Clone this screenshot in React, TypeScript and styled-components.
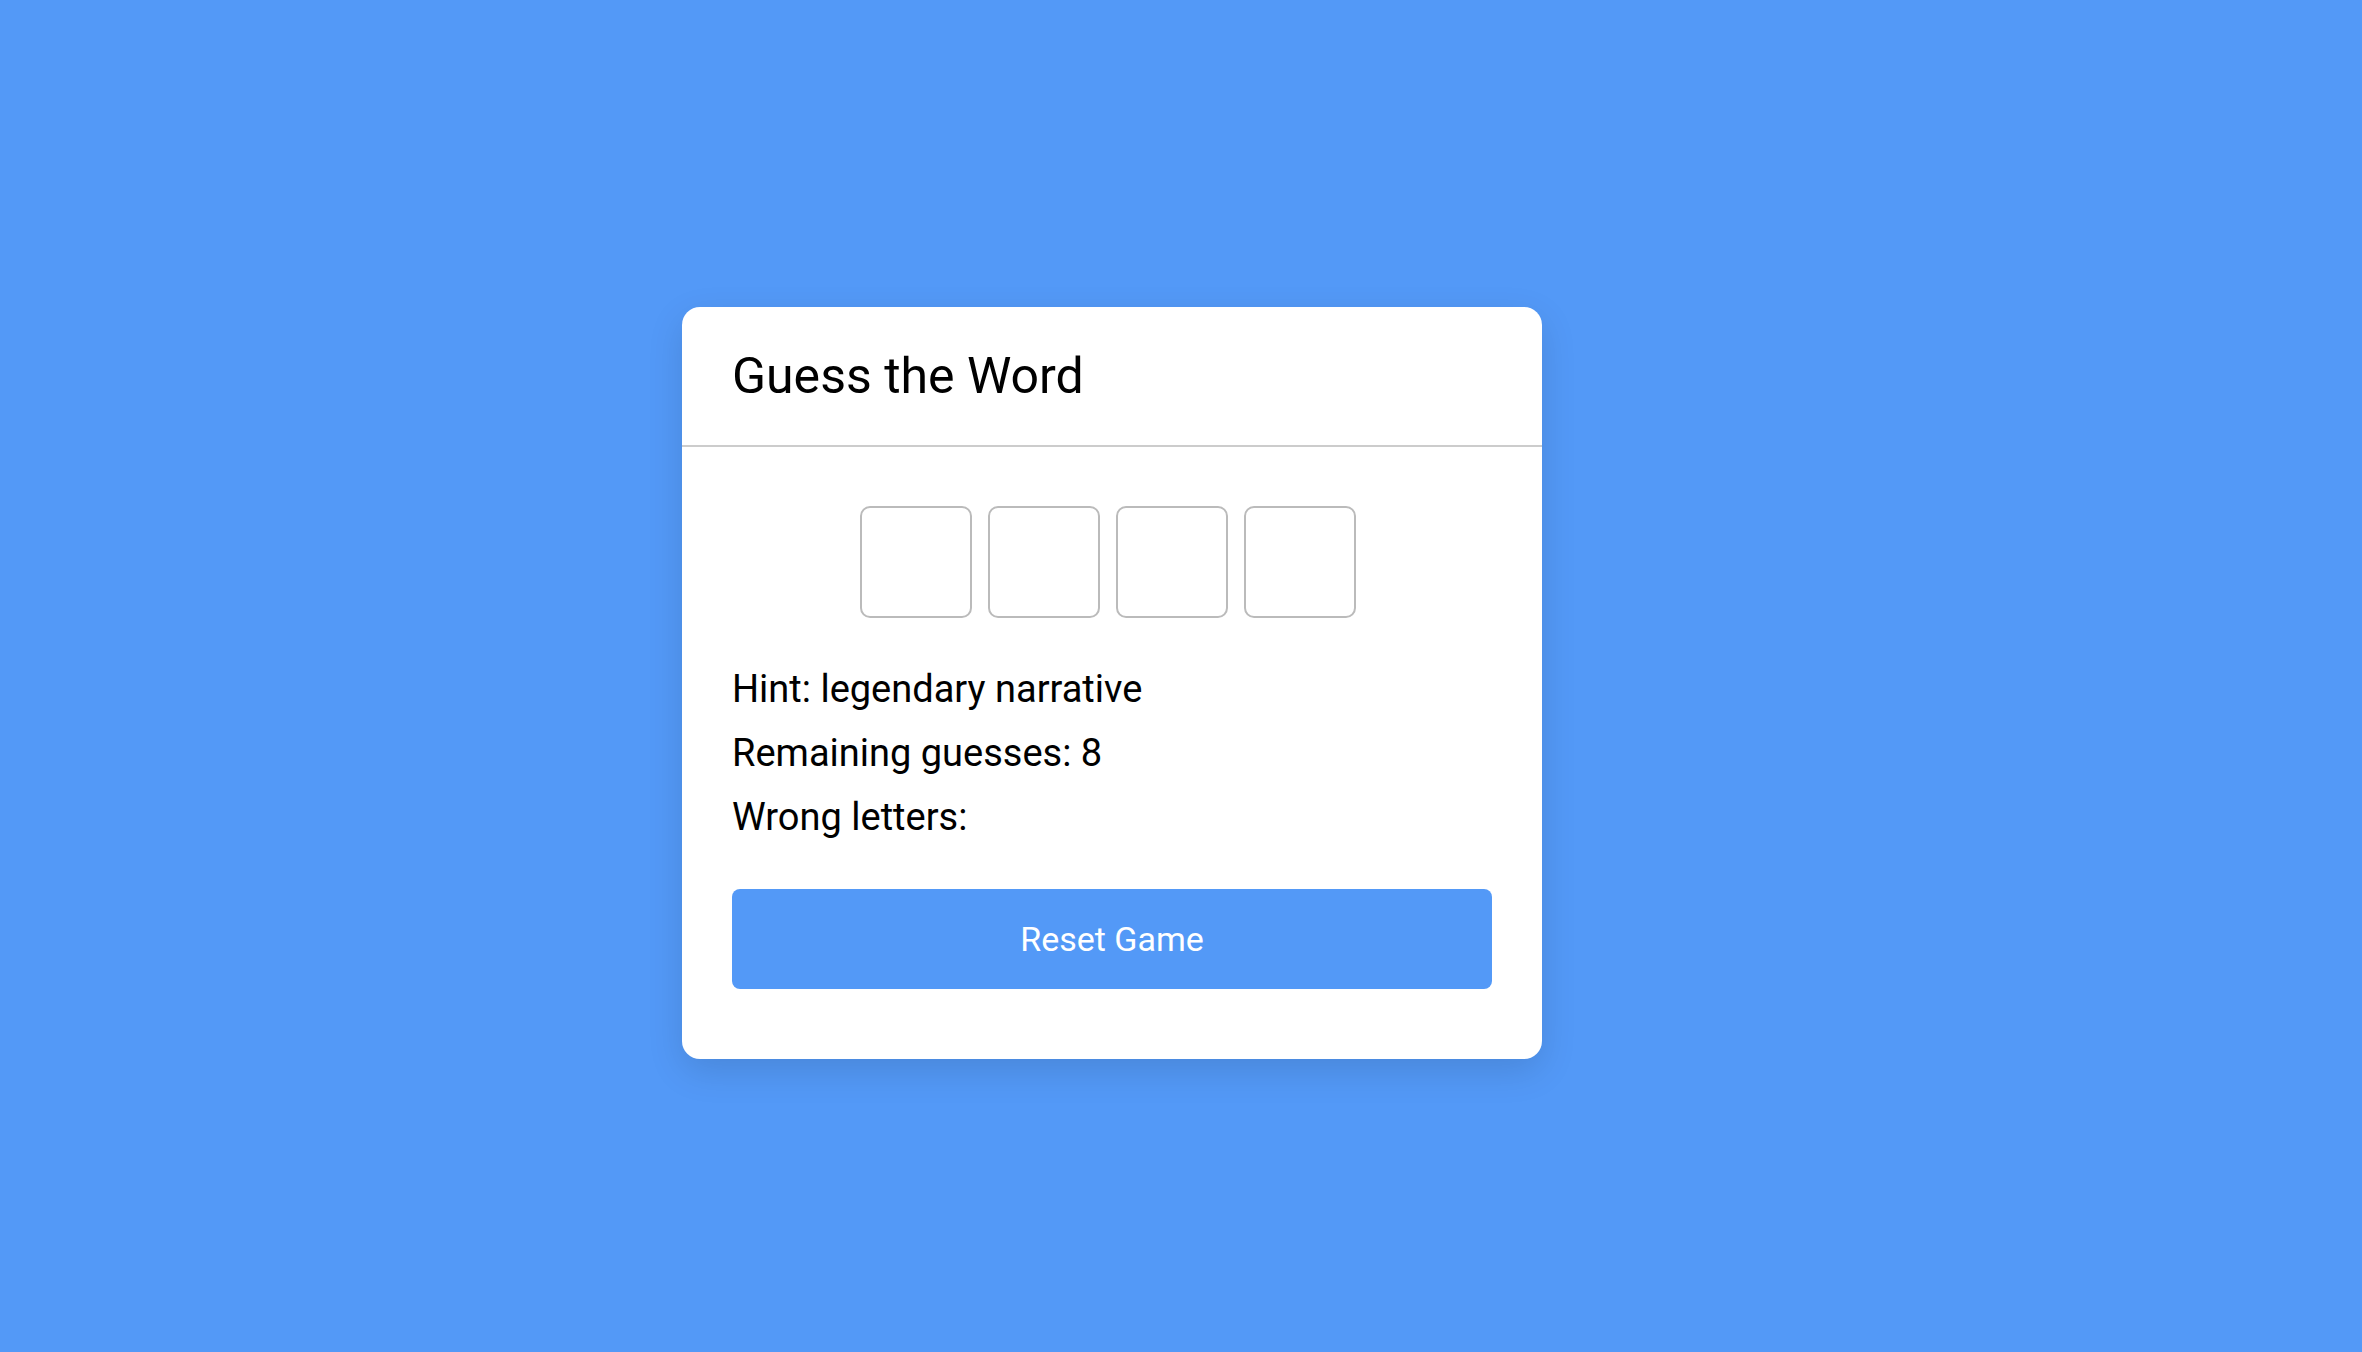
import React from "react";
import styled, { createGlobalStyle } from "styled-components";

const GlobalStyle = createGlobalStyle`
  html, body {
    margin: 0;
    padding: 0;
    background: #5399f7;
  }
  body {
    font-family: Roboto, "Liberation Sans", Arial, sans-serif;
    color: #000;
  }
`;

const Page = styled.div`
  width: 100vw;
  height: 100vh;
  display: flex;
  justify-content: center;
  align-items: flex-start;
  padding: 307px 138px 0 0;
  box-sizing: border-box;
  background: #5399f7;
`;

const Card = styled.div`
  width: 860px;
  background: #ffffff;
  border-radius: 18px;
  box-shadow: 0 12px 36px rgba(0, 0, 0, 0.12);
  overflow: hidden;
`;

const Header = styled.div`
  padding: 40px 50px 40px;
  border-bottom: 2px solid #cccccc;
`;

const Title = styled.h1`
  margin: 0;
  font-size: 50px;
  font-weight: 400;
  line-height: normal;
`;

const Body = styled.div`
  padding: 59px 50px 70px;
  display: flex;
  flex-direction: column;
`;

const TileRow = styled.div`
  display: flex;
  justify-content: center;
  gap: 16px;
  padding-right: 8px;
  margin-bottom: 49px;
`;

const Tile = styled.div`
  width: 112px;
  height: 112px;
  box-sizing: border-box;
  border: 2px solid #bbbbbb;
  border-radius: 10px;
  display: flex;
  align-items: center;
  justify-content: center;
  font-size: 48px;
`;

const InfoLine = styled.p<{ $last?: boolean }>`
  margin: 0 0 ${(p) => (p.$last ? "50px" : "20px")};
  font-size: 38px;
  line-height: normal;
`;

const ResetButton = styled.button`
  height: 100px;
  width: 100%;
  border: none;
  border-radius: 8px;
  background: #5399f7;
  color: #ffffff;
  font-family: Roboto, "Liberation Sans", Arial, sans-serif;
  font-size: 34px;
  cursor: pointer;
`;

export default function App() {
  const letters = ["", "", "", ""];
  return (
    <>
      <GlobalStyle />
      <Page>
        <Card>
          <Header>
            <Title>Guess the Word</Title>
          </Header>
          <Body>
            <TileRow>
              {letters.map((l, i) => (
                <Tile key={i}>{l}</Tile>
              ))}
            </TileRow>
            <InfoLine>Hint: legendary narrative</InfoLine>
            <InfoLine>Remaining guesses: 8</InfoLine>
            <InfoLine $last>Wrong letters: </InfoLine>
            <ResetButton>Reset Game</ResetButton>
          </Body>
        </Card>
      </Page>
    </>
  );
}
